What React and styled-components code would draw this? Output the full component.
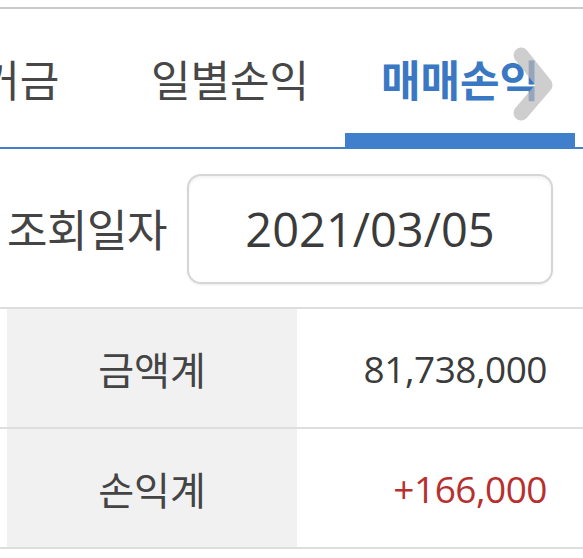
import React from 'react';
import styled, { createGlobalStyle } from 'styled-components';

const GlobalStyle = createGlobalStyle`
	html, body {
		margin: 0;
		padding: 0;
		background: #ffffff;
	}
	body {
		font-family: 'Noto Sans CJK KR', 'Noto Sans', sans-serif;
		color: #444444;
	}
`;

const tabs = ['증거금', '일별손익', '매매손익'];

const rows = [
	{ label: '금액계', value: '81,738,000', tone: 'plain' },
	{ label: '손익계', value: '+166,000', tone: 'up' },
];

const Chevron = () => (
	<svg width='44' height='76' viewBox='0 0 44 76'>
		<polyline
			points='10,9 34,39 10,67'
			fill='none'
			stroke='rgba(185,185,185,0.7)'
			strokeWidth='15'
			strokeLinecap='round'
			strokeLinejoin='round'
		/>
	</svg>
);

export default function App() {
	return (
		<>
			<GlobalStyle />
			<Page>
				<HeaderEdge />
				<TabBar>
					<TabStrip>
						{tabs.map((t) => (
							<Tab key={t} active={t === '매매손익'}>
								{t}
							</Tab>
						))}
					</TabStrip>
					<ScrollHint>
						<Chevron />
					</ScrollHint>
				</TabBar>
				<SearchRow>
					<SearchLabel>조회일자</SearchLabel>
					<DateBox>2021/03/05</DateBox>
				</SearchRow>
				<SummaryTable>
					{rows.map((r) => (
						<SummaryRow key={r.label}>
							<LabelCell>{r.label}</LabelCell>
							<ValueCell tone={r.tone}>{r.value}</ValueCell>
						</SummaryRow>
					))}
				</SummaryTable>
			</Page>
		</>
	);
}

const Page = styled.div`
	width: 583px;
	height: 558px;
	overflow: hidden;
	background: #ffffff;
`;

const HeaderEdge = styled.div`
	height: 7px;
	border-bottom: 2px solid #cbcbcb;
`;

const TabBar = styled.nav`
	position: relative;
	height: 138px;
	border-bottom: 2px solid #3f7fcc;
	overflow: hidden;
`;

const TabStrip = styled.div`
	display: flex;
	height: 100%;
	margin-left: -115px;
`;

const Tab = styled.div`
	flex: 0 0 230px;
	display: flex;
	align-items: center;
	justify-content: center;
	box-sizing: border-box;
	padding-top: 14px;
	font-size: 43px;
	font-weight: ${(props) => (props.active ? 700 : 400)};
	color: ${(props) => (props.active ? '#3a78c4' : '#474747')};
	border-bottom: 14px solid ${(props) => (props.active ? '#3f7fcc' : 'transparent')};
`;

const ScrollHint = styled.div`
	position: absolute;
	left: 511px;
	top: 37px;
	pointer-events: none;
`;

const SearchRow = styled.div`
	display: flex;
	align-items: center;
	height: 160px;
	padding-left: 7px;
	box-sizing: border-box;
	border-bottom: 2px solid #dedede;
`;

const SearchLabel = styled.div`
	font-size: 44px;
	color: #444444;
	width: 180px;
	letter-spacing: -0.5px;
`;

const DateBox = styled.div`
	width: 366px;
	height: 110px;
	box-sizing: border-box;
	display: flex;
	align-items: center;
	justify-content: center;
	border: 2px solid #d6d6d6;
	border-radius: 14px;
	box-shadow: inset 0 2px 3px rgba(0, 0, 0, 0.05), 0 1px 2px rgba(0, 0, 0, 0.08);
	font-family: 'Open Sans', 'Noto Sans', sans-serif;
	font-size: 47px;
	color: #3b3b3b;
	margin-top: 2px;
`;

const SummaryTable = styled.div`
	display: flex;
	flex-direction: column;
`;

const SummaryRow = styled.div`
	display: flex;
	height: 118px;
	padding-left: 7px;
	border-bottom: 2px solid #dedede;
`;

const LabelCell = styled.div`
	width: 290px;
	background: #f1f1f1;
	display: flex;
	align-items: center;
	justify-content: center;
	font-size: 39px;
	color: #444444;
`;

const ValueCell = styled.div`
	flex: 1;
	display: flex;
	align-items: center;
	justify-content: flex-end;
	padding-right: 36px;
	font-family: 'Open Sans', 'Noto Sans', sans-serif;
	font-size: 37px;
	letter-spacing: -0.5px;
	color: ${(props) => (props.tone === 'up' ? '#b8302e' : '#3b3b3b')};
`;
